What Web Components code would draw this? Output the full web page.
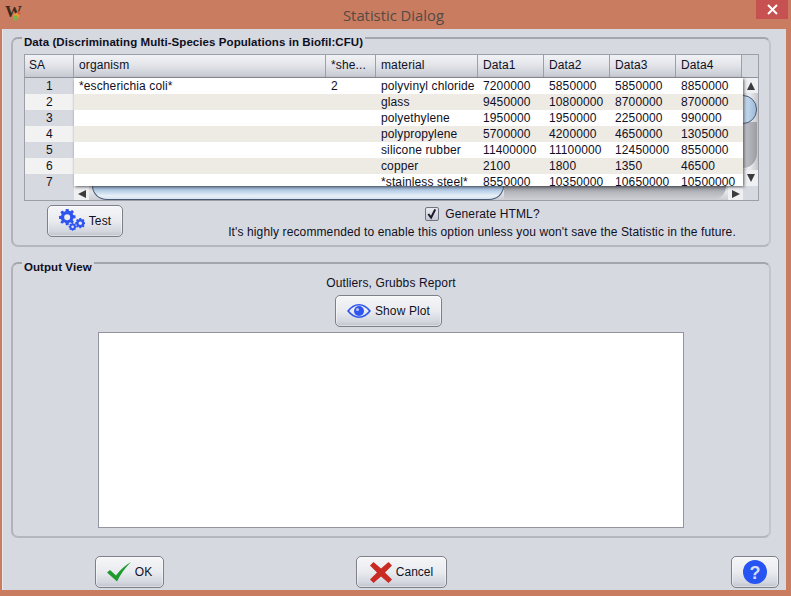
<!DOCTYPE html>
<html>
<head>
<meta charset="utf-8">
<title>Statistic Dialog</title>
<style>
  html, body { margin: 0; padding: 0; background: #c97c5f; }
  body { font: 12px "Liberation Sans", Arial, sans-serif; color: #111122; }
</style>
</head>
<body>
<stat-dialog>
  <group-panel slot="data" style="height:210px" label="Data (Discriminating Multi-Species Populations in Biofil:CFU)">
    <data-table></data-table>
    <test-row></test-row>
  </group-panel>
  <group-panel slot="output" style="height:276px" label="Output View">
    <output-view></output-view>
  </group-panel>
  <swing-button slot="ok" icon="check" style="width:69px">OK</swing-button>
  <swing-button slot="cancel" icon="cross" style="width:91px">Cancel</swing-button>
  <swing-button slot="help" icon="help" style="width:48px"></swing-button>
</stat-dialog>

<script>
const ICONS = {
  gears: `<svg width="26" height="24" viewBox="0 0 26 24"><g fill="#2f55f0">
      <path fill-rule="evenodd" d="M8 0h3l.5 2.6 1.6.7L15.300 1.800l2.100 2.100-1.500 2.200.7 1.600 2.600.5v3l-2.600.5-.7 1.600 1.500 2.200-2.100 2.100-2.200-1.500-1.600.7-.5 2.600H8l-.5-2.600-1.600-.7-2.200 1.500L1.600 16.200l1.500-2.200-.7-1.600L0 11.800v-3l2.400-.5.7-1.600L1.600 4.500 3.700 2.400l2.200 1.500 1.600-.7zM9.500 6.800a3.500 3.500 0 1 0 0 7 3.500 3.500 0 0 0 0-7z" transform="translate(0 -.5) scale(.86)"/>
      <path fill-rule="evenodd" d="M19.200 12h2l.3 1.300 1 .4 1.100-.7 1.400 1.400-.7 1.100.4 1 1.300.3v2l-1.300.3-.4 1 .7 1.100-1.400 1.400-1.100-.7-1 .4-.3 1.300h-2l-.3-1.300-1-.4-1.100.7-1.400-1.400.7-1.100-.4-1-1.300-.3v-2l1.300-.3.4-1-.7-1.100 1.400-1.400 1.100.7 1-.4zM20.200 16a2 2 0 1 0 0 4 2 2 0 0 0 0-4z" transform="translate(3.500 -1.500) scale(.88)"/>
      <path fill-rule="evenodd" d="M11.500 17.500h1.600l.2 1 .7.300.9-.5 1.100 1.100-.5.900.3.700 1 .2v1.600l-1 .2-.3.700.5.900-1.100 1.100-.9-.5-.7.300-.2 1h-1.600l-.2-1-.7-.3-.9.500-1.100-1.100.5-.900-.3-.7-1-.2v-1.600l1-.2.300-.7-.5-.9 1.100-1.100.9.500.7-.3zM12.300 20.500a1.500 1.500 0 1 0 0 3 1.500 1.500 0 0 0 0-3z" transform="translate(2.800 -1.500) scale(.88)"/>
    </g></svg>`,
  eye: `<svg width="24" height="14" viewBox="0 0 24 14"><path fill="#2f55f0" fill-rule="evenodd" d="M0 7C3.500 2.300 7.500 0 12 0s8.500 2.300 12 7c-3.500 4.700-7.500 7-12 7S3.500 11.700 0 7zm2.200 0c2.800 3.400 6 5.400 9.800 5.400s7-2 9.800-5.400C19 3.600 15.800 1.600 12 1.600S5 3.600 2.200 7z"/><circle cx="12" cy="7" r="5" fill="#2f55f0"/><circle cx="10.500" cy="5.500" r="1.500" fill="#b9c6f7"/></svg>`,
  check: `<svg width="24" height="20" viewBox="0 0 24 20"><path fill="#1f9a2e" d="M0 10.500 3 8l6 5.500C13 8 18 3.500 24 0 18 6 13.500 12 10 19.500z"/></svg>`,
  cross: `<svg width="22" height="21" viewBox="0 0 22 21"><path fill="#c92a22" d="M0 3.500 3.500 0 11 6.500 18.500 0 22 3.500 15 10.500 22 17.500 18.500 21 11 14.500 3.500 21 0 17.500 7 10.500z"/></svg>`,
  help: `<svg width="24" height="24" viewBox="0 0 24 24"><circle cx="12" cy="12" r="12" fill="#2554f2"/><text x="12" y="18.500" text-anchor="middle" font-family="Liberation Sans, sans-serif" font-weight="700" font-size="18" fill="#d8def5">?</text></svg>`
};

customElements.define('stat-dialog', class StatDialog extends HTMLElement {
  constructor() {
    super();
    this.attachShadow({ mode: 'open' }).innerHTML = `
      <style>
        :host { display: flex; flex-direction: column; width: 791px; height: 596px; background: #c97c5f; overflow: hidden; }
        .title { position: relative; height: 29px; flex: none; display: flex; justify-content: center; align-items: center; padding: 0 4px 0 0; box-sizing: border-box; font: 14.800px "Open Sans", "Liberation Sans", sans-serif; color: #544a46; }
        .title span { margin-right: 0; }
        .logo { position: absolute; left: 4px; top: 2px; width: 20px; height: 20px; }
        .close { position: absolute; right: 3px; top: 0; width: 32px; height: 19px; background: #c75050; display: flex; align-items: center; justify-content: center; }
        .client { flex: none; height: 561px; margin: 0 5px 0 2px; background: #d6d9e0; border-left: 1px solid #e6e8ec; padding: 8px 14px 0 8px; box-sizing: border-box; display: flex; flex-direction: column; }
        .foot { display: flex; margin-top: 18px; height: 32px; }
        .foot .l { margin-left: 84px; }
        .foot .m { margin-left: 192px; }
        .foot .r { margin-left: auto; margin-right: -7px; }
        .gap { height: 15px; flex: none; }
      </style>
      <div class="title">
        <svg class="logo" viewBox="0 0 20 20">
          <text x="1" y="15" font-family="Liberation Serif, serif" font-weight="700" font-size="17" fill="#3a2a20">W</text>
          <path d="M10 12l6-3-1 6-3 3-3-2z" fill="#e59a3c"/><circle cx="11.500" cy="16" r="2.500" fill="#7fb04a"/><circle cx="15" cy="11" r="1.500" fill="#d8553a"/>
        </svg>
        <span>Statistic Dialog</span>
        <div class="close"><svg width="11" height="11" viewBox="0 0 11 11"><path d="M1 1l9 9M10 1l-9 9" stroke="#fff" stroke-width="2"/></svg></div>
      </div>
      <div class="client">
        <slot name="data"></slot>
        <div class="gap"></div>
        <slot name="output"></slot>
        <div class="foot">
          <div class="l"><slot name="ok"></slot></div>
          <div class="m"><slot name="cancel"></slot></div>
          <div class="r"><slot name="help"></slot></div>
        </div>
      </div>`;
  }
});

customElements.define('group-panel', class GroupPanel extends HTMLElement {
  constructor() {
    super();
    this.attachShadow({ mode: 'open' }).innerHTML = `
      <style>
        :host { display: block; flex: none; position: relative; width: 760px; box-sizing: border-box; }
        .box { border: 2px solid #a9acb2; border-color: #a3a6ac #c2c5cb #b4b7bc #b0b3b9; border-radius: 7px; padding: 15px 10px 0 11px; box-sizing: border-box; height: 100%; }
        .legend { position: absolute; left: 11px; top: -1px; padding: 0 2px 0 2px; background: #d6d9e0; font: 700 11.500px/13px "Liberation Sans", sans-serif; letter-spacing: .07px; color: #0f0f22; }
      </style>
      <div class="box"><slot></slot></div>
      <div class="legend"></div>`;
    this.shadowRoot.querySelector('.legend').textContent = this.getAttribute('label');
  }
});

customElements.define('data-table', class DataTable extends HTMLElement {
  constructor() {
    super();
    const cols = [
      ['SA', 49], ['organism', 252], ['*she...', 50], ['material', 102],
      ['Data1', 66], ['Data2', 66], ['Data3', 66], ['Data4', 66]
    ];
    const rows = [
      ['*escherichia coli*', '2', 'polyvinyl chloride', '7200000', '5850000', '5850000', '8850000'],
      ['', '', 'glass', '9450000', '10800000', '8700000', '8700000'],
      ['', '', 'polyethylene', '1950000', '1950000', '2250000', '990000'],
      ['', '', 'polypropylene', '5700000', '4200000', '4650000', '1305000'],
      ['', '', 'silicone rubber', '11400000', '11100000', '12450000', '8550000'],
      ['', '', 'copper', '2100', '1800', '1350', '46500'],
      ['', '', '*stainless steel*', '8550000', '10350000', '10650000', '10500000']
    ];
    const tpl = cols.map(c => c[1] + 'px').join(' ');
    const head = cols.map(c => `<div class="th">${c[0]}</div>`).join('');
    const side = rows.map((r, i) => `<div class="rh">${i + 1}</div>`).join('');
    const body = rows.map(r => `<div class="tr">${r.map(v => `<div class="td">${v}</div>`).join('')}</div>`).join('');
    this.attachShadow({ mode: 'open' }).innerHTML = `
      <style>
        :host { display: block; width: 735px; height: 147px; box-sizing: border-box; border: 1px solid #9c9fa8; font: 12px/16px "Liberation Sans", sans-serif; letter-spacing: .12px; color: #101024; overflow: hidden; position: relative; }
        .head { display: grid; grid-template-columns: ${tpl}; justify-content: start; height: 22px; }
        .th { padding-left: 5px; line-height: 21px; border-right: 1px solid #9c9fa8; box-sizing: border-box; background: linear-gradient(#f1f2f5, #e3e5ea 45%, #c6c9d1); }
        .th:first-child { padding-left: 4px; }
        .mid { display: flex; height: 123px; border-top: 1px solid #8f929c; margin-top: -1px; position: relative; top: 1px; }
        .side { width: 49px; flex: none; height: 123px; overflow: hidden; }
        .rh { height: 16px; text-align: center; background: #d6d9e0; }
        .rh:nth-child(even) { background: #f2f2f3; }
        .center { width: 684px; position: relative; }
        .view { width: 669px; height: 108px; overflow: hidden; background: #fff; box-shadow: 1px 1px 3px rgba(40,40,50,.75); position: relative; z-index: 1; }
        .tr { display: grid; grid-template-columns: 252px 50px 102px 66px 66px 66px 66px 1px; height: 16px; white-space: nowrap; }
        .tr:nth-child(even) { background: #eeeae4; }
        .td { padding-left: 5px; }
        .hbar { height: 15px; width: 669px; display: flex; background: linear-gradient(#d0d2d8, #e4e5e9 40%, #c9cbd1); overflow: hidden; }
        .vbar { position: absolute; left: 669px; top: 0; width: 15px; height: 108px; overflow: hidden; background: linear-gradient(90deg, #d0d2d8, #eceef0 40%, #c4c6cc); }
        .arrow { position: absolute; background: #eef0f2; display: flex; align-items: center; justify-content: center; color: #444; }
        .hthumb { position: absolute; left: 18px; top: 108px; width: 412px; height: 14px; border: 1px solid #4a5a72; border-top: 0; border-radius: 0 0 15px 15px / 0 0 14px 14px; box-sizing: border-box; background: linear-gradient(#8fabca, #bcd3ea 40%, #e8f0f8 75%, #d5e3f0); }
        .vthumb { position: absolute; left: -14px; top: 17px; width: 28px; height: 29px; border: 1px solid #4a5a72; border-radius: 14px; box-sizing: border-box; background: linear-gradient(90deg, #e8f0f8, #bcd3ea 70%, #9dbad8); }
        .vtrack { position: absolute; left: -14px; top: 44px; width: 28px; height: 46px; border-radius: 0 0 14px 14px; background: linear-gradient(90deg, #d0d2d7, #bdbfc5 60%, #9a9ca2); box-shadow: 0 1px 0 #f3f4f5; }
        .htrack { position: absolute; left: 430px; top: 108px; width: 222px; height: 14px; border-radius: 0 0 14px 0; background: linear-gradient(#8e9096, #b5b7bd 45%, #cfd1d6); }
        .up, .down { left: 0; width: 15px; height: 15px; }
        .up { top: 0; } .down { top: 92px; height: 16px; }
        .left, .right { top: 108px; width: 15px; height: 15px; }
        .left { left: 0; } .right { left: 654px; }
        svg { display: block; }
      </style>
      <div class="head">${head}</div>
      <div class="mid">
        <div class="side">${side}</div>
        <div class="center">
          <div class="view">${body}</div>
          <div class="hbar"></div>
          <div class="htrack"></div>
          <div class="hthumb"></div>
          <div class="arrow left"><svg width="8" height="8"><path d="M0 4l8-4v8z" fill="#3c3c3c"/></svg></div>
          <div class="arrow right"><svg width="8" height="8"><path d="M8 4L0 0v8z" fill="#3c3c3c"/></svg></div>
          <div class="vbar">
            <div class="vtrack"></div>
            <div class="vthumb"></div>
            <div class="arrow up"><svg width="8" height="8"><path d="M4 0l4 8H0z" fill="#3c3c3c"/></svg></div>
            <div class="arrow down"><svg width="8" height="8"><path d="M4 8l4-8H0z" fill="#3c3c3c"/></svg></div>
          </div>
        </div>
      </div>`;
  }
});

customElements.define('test-row', class TestRow extends HTMLElement {
  constructor() {
    super();
    this.attachShadow({ mode: 'open' }).innerHTML = `
      <style>
        :host { display: flex; width: 735px; height: 40px; margin-top: 4px; font: 12px/14px "Liberation Sans", sans-serif; letter-spacing: .12px; color: #101024; }
        .btn { margin-left: 23px; }
        .opts { margin-left: 105px; width: 508px; display: flex; flex-direction: column; align-items: center; }
        .gen { display: flex; align-items: center; gap: 6px; height: 17px; margin-left: 1px; }
        .box { width: 12px; height: 12px; border: 1px solid #6f7480; border-radius: 2px; background: linear-gradient(#e8ebf0, #c4c9d4); display: block; }
        .note { margin-top: 3px; white-space: nowrap; }
      </style>
      <div class="btn"><swing-button icon="gears" style="width:76px">Test</swing-button></div>
      <div class="opts">
        <div class="gen">
          <svg class="box" viewBox="0 0 13 13"><path d="M2.500 6.500l3 4 4.500-9" fill="none" stroke="#1a1a2a" stroke-width="2.200"/></svg>
          <span>Generate HTML?</span>
        </div>
        <div class="note">It's highly recommended to enable this option unless you won't save the Statistic in the future.</div>
      </div>`;
  }
});

customElements.define('output-view', class OutputView extends HTMLElement {
  constructor() {
    super();
    this.attachShadow({ mode: 'open' }).innerHTML = `
      <style>
        :host { display: flex; flex-direction: column; align-items: center; width: 735px; margin-top: -3px; font: 12px/14px "Liberation Sans", sans-serif; letter-spacing: .12px; color: #101024; }
        .cap { height: 14px; margin-right: 1px; }
        .btn { margin-top: 5px; height: 32px; margin-right: 6px; }
        .area { margin-top: 5px; margin-right: 1px; width: 586px; height: 196px; background: #fff; border: 1px solid #9295a0; box-sizing: border-box; }
      </style>
      <div class="cap">Outliers, Grubbs Report</div>
      <div class="btn"><swing-button icon="eye" style="width:107px">Show Plot</swing-button></div>
      <div class="area"></div>`;
  }
});

customElements.define('swing-button', class SwingButton extends HTMLElement {
  constructor() {
    super();
    const icon = ICONS[this.getAttribute('icon')] || '';
    this.attachShadow({ mode: 'open' }).innerHTML = `
      <style>
        :host { display: block; height: 32px; font: 12px/14px "Liberation Sans", sans-serif; color: #101024; }
        .b { height: 100%; box-sizing: border-box; border: 1px solid #7d8088; border-radius: 5px; background: linear-gradient(#f6f6f8, #e9ebef 50%, #d3d6de 85%, #bfc2cb); box-shadow: inset 0 0 0 1px rgba(255,255,255,.45); display: flex; align-items: center; justify-content: center; gap: 4px; }
        svg { display: block; }
      </style>
      <div class="b">${icon}<slot></slot></div>`;
  }
});
</script>
</body>
</html>
